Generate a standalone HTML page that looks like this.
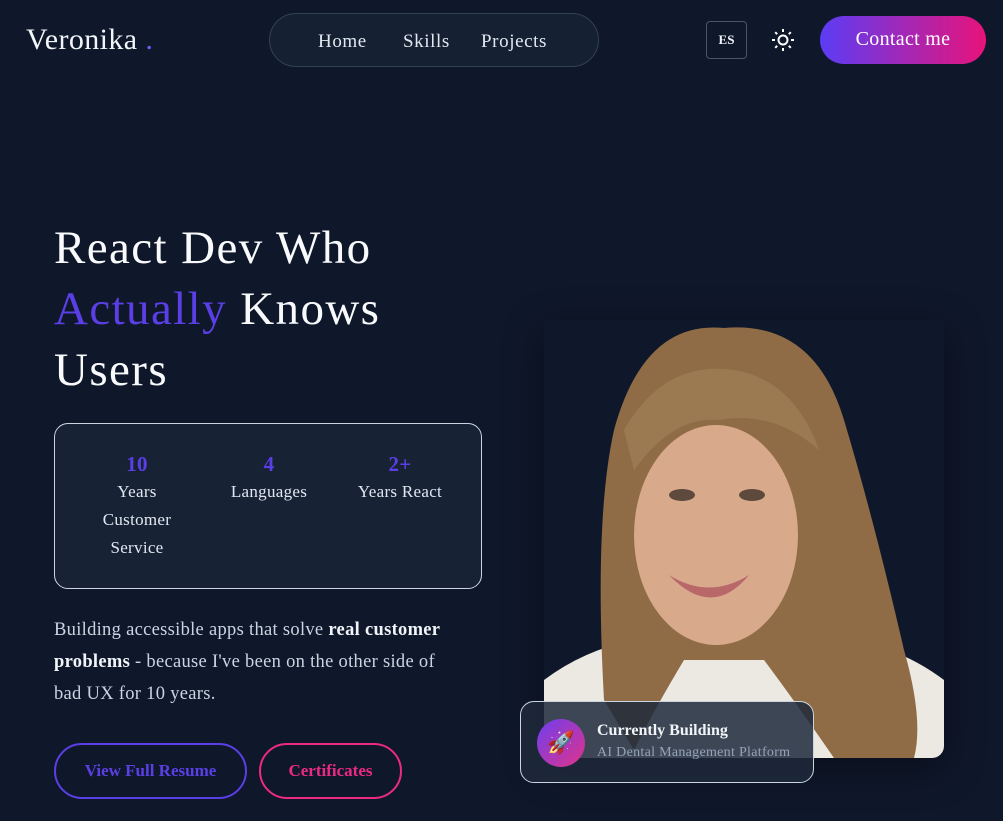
<!DOCTYPE html>
<html><head><style>
*{margin:0;padding:0;box-sizing:border-box}
body{width:1003px;height:821px;background:#0f172a;font-family:"Liberation Serif",serif;color:#f1f5f9;position:relative;overflow:hidden}
.a{position:absolute}
</style></head><body>
<div class="a" style="left:26px;top:23px;font-size:30px;letter-spacing:0.4px;color:#f1f5f9">Veronika<span style="color:#6d5cf6;font-size:30px"> .</span></div>
<div class="a" style="left:269px;top:13px;width:330px;height:54px;border:1px solid #334155;border-radius:27px;background:#152033;font-size:19px;letter-spacing:0.6px;color:#e2e8f0">
<span class="a" style="left:48px;top:17px">Home</span><span class="a" style="left:133px;top:17px">Skills</span><span class="a" style="left:211px;top:17px">Projects</span></div>
<div class="a" style="left:706px;top:21px;width:41px;height:38px;border:1px solid #475569;border-radius:4px;font-size:13px;font-weight:bold;text-align:center;line-height:36px">ES</div>
<svg class="a" style="left:771px;top:28px" width="24" height="24" viewBox="0 0 24 24" fill="none" stroke="#fff" stroke-width="2"><circle cx="12" cy="12" r="4.5"/><path d="M12 1v3M12 20v3M1 12h3M20 12h3M4.2 4.2l2 2M17.8 17.8l2 2M4.2 19.8l2-2M17.8 6.2l2-2"/></svg>
<div class="a" style="left:820px;top:16px;width:166px;height:48px;border-radius:24px;background:linear-gradient(90deg,#5b3df5,#e8137a);font-size:20px;letter-spacing:0.3px;text-align:center;line-height:47px;color:#fff">Contact me</div>
<div class="a" style="left:54px;top:218px;font-size:47px;letter-spacing:1.4px;line-height:61px;color:#f8fafc">React Dev Who<br><span style="color:#5b3fe6">Actually</span> Knows<br>Users</div>
<div class="a" style="left:54px;top:423px;width:428px;height:166px;border:1px solid #cbd5e1;border-radius:14px;background:#172235">
<div class="a" style="left:36px;top:26px;width:92px;text-align:center;font-size:17px;letter-spacing:0.3px;line-height:28px;color:#e2e8f0"><div style="color:#5b3fe6;font-size:21px;font-weight:bold">10</div>Years Customer Service</div>
<div class="a" style="left:160px;top:26px;width:108px;text-align:center;font-size:17px;letter-spacing:0.3px;line-height:28px;color:#e2e8f0"><div style="color:#5b3fe6;font-size:21px;font-weight:bold">4</div>Languages</div>
<div class="a" style="left:290px;top:26px;width:110px;text-align:center;font-size:17px;letter-spacing:0.3px;line-height:28px;color:#e2e8f0"><div style="color:#5b3fe6;font-size:21px;font-weight:bold">2+</div>Years React</div>
</div>
<div class="a" style="left:54px;top:614px;width:400px;font-size:18.5px;letter-spacing:0.3px;line-height:32px;color:#cbd5e1">Building accessible apps that solve <b style="color:#f1f5f9">real customer problems</b> - because I've been on the other side of bad UX for 10 years.</div>
<div class="a" style="left:54px;top:743px;width:193px;height:56px;border:2px solid #5b3fe6;border-radius:28px;color:#5b3fe6;font-size:17px;font-weight:bold;text-align:center;line-height:52px">View Full Resume</div>
<div class="a" style="left:259px;top:743px;width:143px;height:56px;border:2px solid #ec2a86;border-radius:28px;color:#ec2a86;font-size:17px;font-weight:bold;text-align:center;line-height:52px">Certificates</div>
<div class="a" style="left:544px;top:320px;width:400px;height:438px;border-radius:0 0 12px 12px;overflow:hidden;box-shadow:0 10px 40px rgba(0,0,0,.4)">
<svg width="400" height="438" viewBox="0 0 400 438">
<rect width="400" height="438" fill="#0f172a"/>
<path d="M0 360 Q40 330 90 320 L310 320 Q360 330 400 360 L400 438 L0 438Z" fill="#ece8e2"/>
<path d="M60 380 Q50 200 70 110 Q100 0 180 8 Q270 0 300 100 Q330 200 360 330 Q380 400 370 438 L290 438 Q250 380 220 340 L140 340 Q110 390 90 430Z" fill="#8f6c45"/>
<ellipse cx="172" cy="215" rx="82" ry="110" fill="#d9a98c"/>
<path d="M80 110 Q120 40 190 50 Q250 60 275 130 Q230 90 175 100 Q130 95 90 150Z" fill="#9b7a52"/>
<path d="M125 255 Q165 280 205 255 Q168 300 125 255Z" fill="#b9686a"/>
<ellipse cx="138" cy="175" rx="13" ry="6" fill="#5d4a3d"/><ellipse cx="208" cy="175" rx="13" ry="6" fill="#5d4a3d"/>
</svg></div>
<div class="a" style="left:520px;top:701px;width:294px;height:82px;border:1px solid #cbd5e1;border-radius:14px;background:rgba(30,41,59,.85)">
<div class="a" style="left:16px;top:17px;width:48px;height:48px;border-radius:50%;background:linear-gradient(135deg,#6d3ef0,#e0338a);text-align:center;line-height:48px;font-size:22px">🚀</div>
<div class="a" style="left:76px;top:20px;font-size:16px;font-weight:bold;color:#f1f5f9">Currently Building</div>
<div class="a" style="left:76px;top:43px;font-size:14px;letter-spacing:0.3px;color:#94a3b8">AI Dental Management Platform</div>
</div>
</body></html>
